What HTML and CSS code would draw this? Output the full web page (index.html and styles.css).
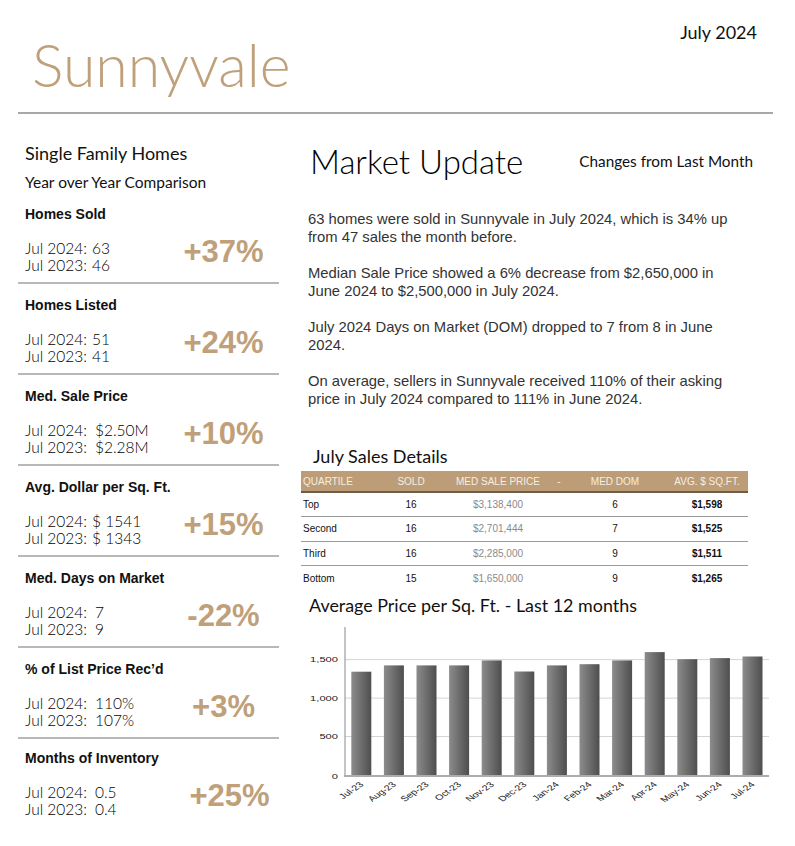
FILE: index.html
```html
<!DOCTYPE html>
<html>
<head>
<meta charset="utf-8">
<link rel="stylesheet" href="styles.css">
</head>
<body>
<div class="page">
  <header class="top">
    <h1 class="city">Sunnyvale</h1>
    <div class="date">July 2024</div>
  </header>
  <div class="rule"></div>
  <main class="cols">
    <aside class="left">
      <div class="lh1">Single Family Homes</div>
      <div class="lh2">Year over Year Comparison</div>

      <section class="stat">
        <div class="stat-title">Homes Sold</div>
        <div class="stat-body">
          <div class="vals"><span>Jul 2024:</span><span>63</span><span>Jul 2023:</span><span>46</span></div>
          <div class="pct">+37%</div>
        </div>
      </section>
      <section class="stat">
        <div class="stat-title">Homes Listed</div>
        <div class="stat-body">
          <div class="vals"><span>Jul 2024:</span><span>51</span><span>Jul 2023:</span><span>41</span></div>
          <div class="pct">+24%</div>
        </div>
      </section>
      <section class="stat">
        <div class="stat-title">Med. Sale Price</div>
        <div class="stat-body">
          <div class="vals wide"><span>Jul 2024:</span><span>$2.50M</span><span>Jul 2023:</span><span>$2.28M</span></div>
          <div class="pct">+10%</div>
        </div>
      </section>
      <section class="stat">
        <div class="stat-title">Avg. Dollar per Sq. Ft.</div>
        <div class="stat-body">
          <div class="vals"><span>Jul 2024:</span><span>$ 1541</span><span>Jul 2023:</span><span>$ 1343</span></div>
          <div class="pct">+15%</div>
        </div>
      </section>
      <section class="stat">
        <div class="stat-title">Med. Days on Market</div>
        <div class="stat-body">
          <div class="vals wide"><span>Jul 2024:</span><span>7</span><span>Jul 2023:</span><span>9</span></div>
          <div class="pct">-22%</div>
        </div>
      </section>
      <section class="stat">
        <div class="stat-title">% of List Price Rec’d</div>
        <div class="stat-body">
          <div class="vals wide"><span>Jul 2024:</span><span>110%</span><span>Jul 2023:</span><span>107%</span></div>
          <div class="pct">+3%</div>
        </div>
      </section>
      <section class="stat last">
        <div class="stat-title">Months of Inventory</div>
        <div class="stat-body">
          <div class="vals wide"><span>Jul 2024:</span><span>0.5</span><span>Jul 2023:</span><span>0.4</span></div>
          <div class="pct shift">+25%</div>
        </div>
      </section>
    </aside>

    <div class="right">
      <div class="mu-head">
        <h2 class="mu-title">Market Update</h2>
        <span class="mu-sub">Changes from Last Month</span>
      </div>
      <div class="paras">
        <p>63 homes were sold in Sunnyvale in July 2024, which is 34% up<br>from 47 sales the month before.</p>
        <p>Median Sale Price showed a 6% decrease from $2,650,000 in<br>June 2024 to $2,500,000 in July 2024.</p>
        <p>July 2024 Days on Market (DOM) dropped to 7 from 8 in June<br>2024.</p>
        <p>On average, sellers in Sunnyvale received 110% of their asking<br>price in July 2024 compared to 111% in June 2024.</p>
      </div>

      <h3 class="sec-title sales">July Sales Details</h3>
      <table class="sales-table">
        <colgroup>
          <col class="c1"><col class="c2"><col class="c3"><col class="c4"><col class="c5"><col class="c6">
        </colgroup>
        <thead>
          <tr><th class="l">QUARTILE</th><th>SOLD</th><th>MED SALE PRICE</th><th>-</th><th>MED DOM</th><th>AVG. $ SQ.FT.</th></tr>
        </thead>
        <tbody>
          <tr><td class="l">Top</td><td>16</td><td class="muted">$3,138,400</td><td></td><td>6</td><td>$1,598</td></tr>
          <tr><td class="l">Second</td><td>16</td><td class="muted">$2,701,444</td><td></td><td>7</td><td>$1,525</td></tr>
          <tr><td class="l">Third</td><td>16</td><td class="muted">$2,285,000</td><td></td><td>9</td><td>$1,511</td></tr>
          <tr><td class="l">Bottom</td><td>15</td><td class="muted">$1,650,000</td><td></td><td>9</td><td>$1,265</td></tr>
        </tbody>
      </table>

      <h3 class="sec-title chart-title">Average Price per Sq. Ft. - Last 12 months</h3>
      <svg class="chart" width="475" height="226" viewBox="0 0 475 226" xmlns="http://www.w3.org/2000/svg">
        <defs>
          <linearGradient id="barg" x1="0" y1="0" x2="1" y2="0">
            <stop offset="0" stop-color="#8c8c8c"/>
            <stop offset="1" stop-color="#4e4e4e"/>
          </linearGradient>
        </defs>
        <g class="grid">
          <line x1="47" y1="40.6" x2="471" y2="40.6"/>
          <line x1="47" y1="79.1" x2="471" y2="79.1"/>
          <line x1="47" y1="117.5" x2="471" y2="117.5"/>
        </g>
        <g class="ylab">
          <text transform="translate(40,43.4) scale(1.45,1)">1,500</text>
          <text transform="translate(40,81.9) scale(1.45,1)">1,000</text>
          <text transform="translate(40,120.3) scale(1.45,1)">500</text>
          <text transform="translate(40,159.6) scale(1.45,1)">0</text>
        </g>
        <g fill="url(#barg)">
          <rect x="53.3" y="52.7" width="20" height="103.3"/>
          <rect x="85.9" y="46.4" width="20" height="109.6"/>
          <rect x="118.5" y="46.4" width="20" height="109.6"/>
          <rect x="151.1" y="46.4" width="20" height="109.6"/>
          <rect x="183.7" y="41.4" width="20" height="114.6"/>
          <rect x="216.3" y="52.5" width="20" height="103.5"/>
          <rect x="248.9" y="46.4" width="20" height="109.6"/>
          <rect x="281.5" y="45.2" width="20" height="110.8"/>
          <rect x="314.1" y="41.4" width="20" height="114.6"/>
          <rect x="346.7" y="33.1" width="20" height="122.9"/>
          <rect x="379.3" y="40.2" width="20" height="115.8"/>
          <rect x="411.9" y="39.1" width="20" height="116.9"/>
          <rect x="444.5" y="37.5" width="20" height="118.5"/>
        </g>
        <line class="yaxis" x1="47" y1="8" x2="47" y2="156"/>
        <line class="base" x1="46" y1="157" x2="471" y2="157"/>
        <g class="xlab">
          <text transform="translate(66.3,166) scale(1.45,1) rotate(-45)">Jul-23</text>
          <text transform="translate(98.9,166) scale(1.45,1) rotate(-45)">Aug-23</text>
          <text transform="translate(131.5,166) scale(1.45,1) rotate(-45)">Sep-23</text>
          <text transform="translate(164.1,166) scale(1.45,1) rotate(-45)">Oct-23</text>
          <text transform="translate(196.7,166) scale(1.45,1) rotate(-45)">Nov-23</text>
          <text transform="translate(229.3,166) scale(1.45,1) rotate(-45)">Dec-23</text>
          <text transform="translate(261.9,166) scale(1.45,1) rotate(-45)">Jan-24</text>
          <text transform="translate(294.5,166) scale(1.45,1) rotate(-45)">Feb-24</text>
          <text transform="translate(327.1,166) scale(1.45,1) rotate(-45)">Mar-24</text>
          <text transform="translate(359.7,166) scale(1.45,1) rotate(-45)">Apr-24</text>
          <text transform="translate(392.3,166) scale(1.45,1) rotate(-45)">May-24</text>
          <text transform="translate(424.9,166) scale(1.45,1) rotate(-45)">Jun-24</text>
          <text transform="translate(457.5,166) scale(1.45,1) rotate(-45)">Jul-24</text>
        </g>
      </svg>
    </div>
  </main>
</div>
</body>
</html>
```

FILE: styles.css
```css
* { box-sizing: border-box; }
html, body { margin: 0; padding: 0; background: #fff; }
body { font-family: "Liberation Sans", Arial, sans-serif; color: #111; }

.page { width: 795px; height: 846px; overflow: hidden; }

.top {
  height: 112px;
  display: flex;
  justify-content: space-between;
  align-items: flex-start;
  padding: 0 38px 0 32px;
}
.city {
  margin: 35px 0 0;
  font-family: Lato, sans-serif;
  font-weight: 300;
  font-size: 59px;
  line-height: 60px;
  color: #bfa07a;
}
.date {
  margin-top: 22px;
  font-family: Lato, sans-serif;
  font-size: 18px;
  line-height: 20px;
  color: #111;
}
.rule {
  margin-left: 18px;
  width: 755px;
  height: 2px;
  background: #a8a8a8;
}

.cols {
  display: grid;
  grid-template-columns: 261px 473px;
  column-gap: 21px;
  padding-left: 18px;
}

/* left column */
.left { display: flex; flex-direction: column; }
.lh1 {
  margin-top: 28px;
  padding-left: 7px;
  font-family: Lato, sans-serif;
  font-size: 18px;
  line-height: 22px;
  color: #111;
}
.lh2 {
  margin-top: 8px;
  padding-left: 7px;
  font-family: Lato, sans-serif;
  font-size: 15.5px;
  line-height: 20px;
  color: #111;
}
.stat {
  margin-top: 1px;
  height: 91px;
  border-bottom: 2px solid #b8b8b8;
  padding: 13px 0 0 7px;
  margin-bottom: -1px;
}
.stat.last { border-bottom: none; margin-top: -1px; }
.stat-title {
  font-weight: bold;
  font-size: 14px;
  line-height: 16px;
  color: #111;
}
.stat-body {
  display: grid;
  grid-template-columns: 1fr 105px;
  align-items: start;
  margin-top: 18px;
  padding-right: 3px;
}
.vals {
  display: grid;
  grid-template-columns: 67px auto;
  font-family: Lato, sans-serif;
  font-weight: 300;
  font-size: 15.5px;
  line-height: 17px;
  color: #000;
}
.vals.wide { grid-template-columns: 70px auto; }
.pct {
  margin-top: -5px;
  text-align: center;
  font-weight: bold;
  font-size: 31px;
  line-height: 34px;
  color: #bfa07a;
}
.pct.shift { padding-left: 12px; }

/* right column */
.right { display: flex; flex-direction: column; }
.mu-head {
  margin-top: 28px;
  display: flex;
  align-items: center;
  justify-content: space-between;
  padding: 0 20px 0 10px;
  height: 38px;
}
.mu-title {
  margin: 0;
  font-family: Lato, sans-serif;
  font-weight: 300;
  font-size: 33px;
  line-height: 38px;
  color: #000;
}
.mu-sub {
  font-family: Lato, sans-serif;
  font-size: 15.3px;
  color: #111;
}
.paras { margin-top: 31px; padding-left: 8px; width: 473px; }
.paras p {
  margin: 0 0 19px;
  font-size: 14.8px;
  line-height: 17.5px;
  color: #333;
  white-space: nowrap;
}
.sec-title {
  margin: 0;
  font-family: Lato, sans-serif;
  font-weight: 400;
  font-size: 18px;
  line-height: 22px;
  color: #111;
}
.sec-title.sales { margin-top: 18px; padding-left: 13px; }
.sales-table {
  margin-top: 4px;
  margin-left: 1px;
  width: 447px;
  border-collapse: collapse;
  table-layout: fixed;
  font-size: 10px;
}
.c1 { width: 79px; } .c2 { width: 62px; } .c3 { width: 112px; }
.c4 { width: 10px; } .c5 { width: 102px; } .c6 { width: 82px; }
.sales-table th {
  background: #bc9d77;
  color: #f6eee2;
  font-weight: normal;
  height: 21px;
  padding: 0;
  text-align: center;
  border-bottom: 2px solid #6e5c48;
}
.sales-table td {
  height: 24.5px;
  padding: 0;
  text-align: center;
  color: #111;
  border-bottom: 1px solid #9a9a9a;
}
.sales-table tr:last-child td { border-bottom: none; }
.sales-table .l { text-align: left; padding-left: 2px; }
.sales-table td.muted { color: #8a8a8a; }
.sales-table td:last-child { font-weight: bold; }

.sec-title.chart-title { margin-top: 4px; padding-left: 9px; font-size: 17.9px; }
.chart { display: block; margin-top: 3px; margin-left: -2px; }
.chart .grid line { stroke: #d4d4d4; stroke-width: 1; }
.chart .ylab text { font-family: "Liberation Sans", Arial, sans-serif; font-size: 7.7px; fill: #222; text-anchor: end; }
.chart .xlab text { font-family: "Liberation Sans", Arial, sans-serif; font-size: 7.5px; fill: #222; text-anchor: end; }
.chart .yaxis { stroke: #8a8a8a; stroke-width: 1; }
.chart .base { stroke: #acacac; stroke-width: 2; }
```
